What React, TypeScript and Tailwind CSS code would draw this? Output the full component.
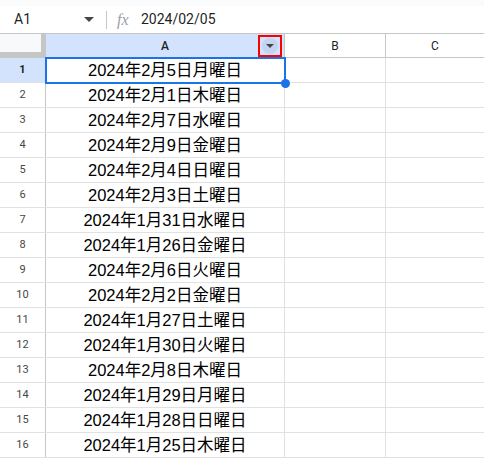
import React from 'react'

const rows = [
  '2024年2月5日月曜日',
  '2024年2月1日木曜日',
  '2024年2月7日水曜日',
  '2024年2月9日金曜日',
  '2024年2月4日日曜日',
  '2024年2月3日土曜日',
  '2024年1月31日水曜日',
  '2024年1月26日金曜日',
  '2024年2月6日火曜日',
  '2024年2月2日金曜日',
  '2024年1月27日土曜日',
  '2024年1月30日火曜日',
  '2024年2月8日木曜日',
  '2024年1月29日月曜日',
  '2024年1月28日日曜日',
  '2024年1月25日木曜日',
]

const ui = { fontFamily: 'Roboto, "Liberation Sans", Arial, sans-serif' }
const cellFont = { fontFamily: '"Liberation Sans", Arial, "Noto Sans CJK JP", sans-serif' }

export default function App() {
  return (
    <div className="relative h-[459px] w-[484px] overflow-hidden bg-white" style={ui}>
      <div className="h-[6px] bg-[#f9fbfd]" />
      <div className="flex h-[28px] items-center border-b border-[#c4c7c5] text-[14px] text-[#1f1f1f]">
        <div className="flex w-[100px] items-center pl-[14px] pr-[6px]">
          <span className="flex-1">A1</span>
          <svg width="10" height="5" viewBox="0 0 10 5"><path d="M0 0h10L5 5z" fill="#444746" /></svg>
        </div>
        <div className="mx-[6px] h-[18px] w-px bg-[#c4c7c5]" />
        <span className="ml-[4px] w-[22px] text-[16px] italic text-[#9aa0a6]" style={{ fontFamily: '"Liberation Serif", serif' }}>fx</span>
        <span className="ml-[2px]">2024/02/05</span>
      </div>

      <div className="flex h-[24px] border-b border-[#c4c7c5] text-[12px] text-[#1f1f1f]">
        <div className="flex w-[46px] flex-col">
          <div className="flex flex-1">
            <div className="flex-1 bg-[#f8f9fa]" />
            <div className="w-[5px] bg-[#c4c7c5]" />
          </div>
          <div className="h-[5px] bg-[#c4c7c5]" />
        </div>
        <div className="relative flex w-[239px] items-center justify-center border-r border-[#c4c7c5] bg-[#d3e3fd] font-medium">
          A
          <div className="absolute right-[2px] top-[1px] flex h-[22px] w-[24px] items-center justify-center border-2 border-[#ff0000]">
            <div className="flex h-[16px] w-[16px] items-center justify-center rounded-full bg-[#c2d4f0]">
              <svg width="8" height="4" viewBox="0 0 8 4"><path d="M0 0h8L4 4z" fill="#444746" /></svg>
            </div>
          </div>
        </div>
        <div className="flex w-[101px] items-center justify-center border-r border-[#c4c7c5]">B</div>
        <div className="flex flex-1 items-center justify-center">C</div>
      </div>

      {rows.map((text, i) => (
        <div key={i} className="flex h-[25px] border-b border-[#e1e1e1]">
          <div
            className={`flex w-[46px] items-center justify-center border-r border-[#c4c7c5] text-[11px] ${
              i === 0 ? 'bg-[#d3e3fd] font-bold text-[#1f1f1f]' : 'text-[#444746]'
            }`}
          >
            {i + 1}
          </div>
          <div className="flex w-[239px] items-center justify-center border-r border-[#e1e1e1] text-[16.5px] text-black" style={cellFont}>
            {text}
          </div>
          <div className="w-[101px] border-r border-[#e1e1e1]" />
          <div className="flex-1" />
        </div>
      ))}

      <div className="pointer-events-none absolute left-[45px] top-[57px] h-[27px] w-[241px] border-2 border-[#1a73e8]" />
      <div className="absolute left-[281px] top-[79px] h-[9px] w-[9px] rounded-full bg-[#1a73e8]" />
    </div>
  )
}
